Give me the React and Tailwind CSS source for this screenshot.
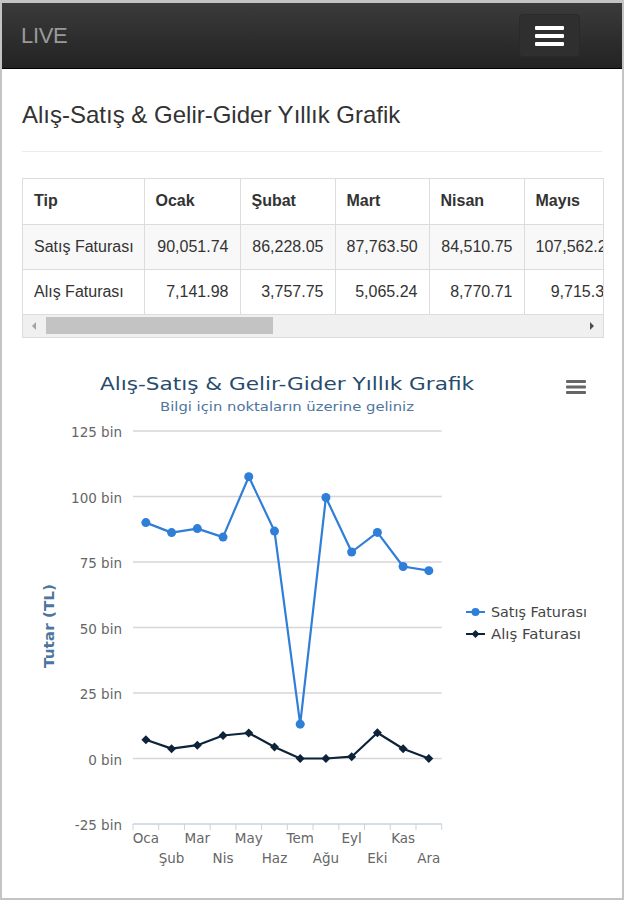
import { useState } from "react";

const months = ["Oca", "Şub", "Mar", "Nis", "May", "Haz", "Tem", "Ağu", "Eyl", "Eki", "Kas", "Ara"];

const satis = [90.05, 86.23, 87.76, 84.51, 107.56, 86.8, 13.1, 99.6, 78.8, 86.3, 73.3, 71.7];
const alis = [7.14, 3.76, 5.07, 8.77, 9.72, 4.4, 0, 0, 0.7, 9.8, 3.7, 0];

const tableCols = [
  { label: "Tip", width: "w-[121px]" },
  { label: "Ocak", width: "w-[96px]" },
  { label: "Şubat", width: "w-[95px]" },
  { label: "Mart", width: "w-[94px]" },
  { label: "Nisan", width: "w-[95px]" },
  { label: "Mayıs", width: "w-[100px]" },
];

const tableRows = [
  { name: "Satış Faturası", values: ["90,051.74", "86,228.05", "87,763.50", "84,510.75", "107,562.25"], striped: true },
  { name: "Alış Faturası", values: ["7,141.98", "3,757.75", "5,065.24", "8,770.71", "9,715.34"], striped: false },
];

// chart geometry, in page pixels
const left = 133;
const right = 441.7;
const step = (right - left) / 12;
const yOf = (v) => 757.5 - v * 2.62;
const xOf = (i) => left + step * (i + 0.5);
const font = "'DejaVu Sans', Verdana, sans-serif";

const Navbar = () => (
  <div className="flex h-[66px] items-center justify-between border-b border-black bg-gradient-to-b from-[#3b3b3b] to-[#232323] pl-[19px] pr-[42px]">
    <span className="font-['Liberation_Sans',Arial,sans-serif] text-[22px] tracking-[-0.3px] text-[#9a9a9a]">LIVE</span>
    <button className="flex h-[43px] w-[61px] flex-col items-center justify-center gap-[4px] rounded-[4px] border border-[#2a2a2a] bg-[#2f2f2f]">
      <span className="h-[4px] w-[29px] rounded-[1px] bg-white" />
      <span className="h-[4px] w-[29px] rounded-[1px] bg-white" />
      <span className="h-[4px] w-[29px] rounded-[1px] bg-white" />
    </button>
  </div>
);

const DataTable = () => (
  <div className="w-[582px] overflow-hidden border border-[#dcdcdc] font-['Liberation_Sans',Arial,sans-serif] text-[16px] text-[#333]">
    <table className="w-[601px] table-fixed border-collapse">
      <thead>
        <tr className="h-[45px]">
          {tableCols.map((c, i) => (
            <th key={c.label} className={`${c.width} border-b border-[#dcdcdc] px-[11px] text-left font-bold ${i < 5 ? "border-r" : ""}`}>
              {c.label}
            </th>
          ))}
        </tr>
      </thead>
      <tbody>
        {tableRows.map((row) => (
          <tr key={row.name} className={`h-[45px] ${row.striped ? "bg-[#f8f8f8]" : "bg-white"}`}>
            <td className="border-b border-r border-[#dcdcdc] px-[11px] whitespace-nowrap">{row.name}</td>
            {row.values.map((v, i) => (
              <td key={i} className={`border-b border-[#dcdcdc] px-[11px] text-right whitespace-nowrap ${i < 4 ? "border-r" : ""}`}>
                {v}
              </td>
            ))}
          </tr>
        ))}
      </tbody>
    </table>
    <div className="flex h-[22px] items-center bg-[#f0f0f0] px-[8px]">
      <svg width="6" height="8" viewBox="0 0 6 8" className="mr-[9px]">
        <path d="M5 0 L1 4 L5 8 Z" fill="#a3a3a3" />
      </svg>
      <div className="h-[17px] w-[227px] bg-[#c3c3c3]" />
      <div className="flex-1" />
      <svg width="6" height="8" viewBox="0 0 6 8">
        <path d="M1 0 L5 4 L1 8 Z" fill="#4d4d4d" />
      </svg>
    </div>
  </div>
);

const Chart = () => {
  const [hover, setHover] = useState(null);
  const grid = [125, 100, 75, 50, 25, 0];
  const line = (data) => data.map((v, i) => `${i ? "L" : "M"}${xOf(i).toFixed(1)} ${yOf(v).toFixed(1)}`).join(" ");

  return (
    <svg width="582" height="545" viewBox="22 345 582 545" className="block">
      <text x="100" y="389" fontFamily={font} fontSize="18" fill="#274b6d" textLength="374" lengthAdjust="spacingAndGlyphs">
        Alış-Satış &amp; Gelir-Gider Yıllık Grafik
      </text>
      <text x="160" y="410" fontFamily={font} fontSize="12.5" fill="#4d759e" textLength="254" lengthAdjust="spacingAndGlyphs">
        Bilgi için noktaların üzerine geliniz
      </text>

      <g fill="#666">
        <rect x="566" y="379" width="20" height="3" rx="1" />
        <rect x="566" y="384.5" width="20" height="3" rx="1" />
        <rect x="566" y="390" width="20" height="3" rx="1" />
      </g>

      {grid.map((g) => (
        <line key={g} x1={left} x2={right} y1={yOf(g)} y2={yOf(g)} stroke="#d6d6d6" strokeWidth="1.5" />
      ))}
      <line x1={left} x2={right} y1={yOf(-25)} y2={yOf(-25)} stroke="#c8d2dc" strokeWidth="1.5" />
      {Array.from({ length: 13 }, (_, i) => (
        <line key={i} x1={left + step * i} x2={left + step * i} y1={yOf(-25)} y2={yOf(-25) + 6} stroke="#c8d2dc" strokeWidth="1" />
      ))}

      {[125, 100, 75, 50, 25, 0, -25].map((g) => (
        <text key={g} x="122" y={yOf(g) + 6} textAnchor="end" fontFamily={font} fontSize="13.5" fill="#666">
          {g} bin
        </text>
      ))}

      <text transform="translate(54 625) rotate(-90)" textAnchor="middle" fontFamily={font} fontSize="14" fontWeight="bold" fill="#4d759e" textLength="84" lengthAdjust="spacingAndGlyphs">
        Tutar (TL)
      </text>

      {months.map((m, i) => (
        <text key={m} x={xOf(i)} y={i % 2 === 0 ? 842 : 862} textAnchor="middle" fontFamily={font} fontSize="13.5" fill="#666">
          {m}
        </text>
      ))}

      <path d={line(satis)} fill="none" stroke="#2f7ed8" strokeWidth="2.2" strokeLinejoin="round" />
      <path d={line(alis)} fill="none" stroke="#0d233a" strokeWidth="2.2" strokeLinejoin="round" />
      {satis.map((v, i) => (
        <circle key={i} cx={xOf(i)} cy={yOf(v)} r={hover === `s${i}` ? 6 : 4.5} fill="#2f7ed8" onMouseEnter={() => setHover(`s${i}`)} onMouseLeave={() => setHover(null)} />
      ))}
      {alis.map((v, i) => {
        const x = xOf(i);
        const y = yOf(v);
        return <path key={i} d={`M${x} ${y - 4.5} L${x + 4.5} ${y} L${x} ${y + 4.5} L${x - 4.5} ${y} Z`} fill="#0d233a" />;
      })}

      <line x1="466" x2="485" y1="611" y2="611" stroke="#2f7ed8" strokeWidth="2" />
      <circle cx="475.5" cy="611" r="4" fill="#2f7ed8" />
      <text x="491" y="616" fontFamily={font} fontSize="13.5" fill="#444" textLength="96" lengthAdjust="spacingAndGlyphs">
        Satış Faturası
      </text>
      <line x1="466" x2="485" y1="633" y2="633" stroke="#0d233a" strokeWidth="2" />
      <path d="M475.5 629 L479.5 633 L475.5 637 L471.5 633 Z" fill="#0d233a" />
      <text x="491" y="638" fontFamily={font} fontSize="13.5" fill="#444" textLength="90" lengthAdjust="spacingAndGlyphs">
        Alış Faturası
      </text>
    </svg>
  );
};

export default function App() {
  return (
    <div className="h-[900px] w-[624px] overflow-hidden border-2 border-t-[3px] border-[#c4c4c4] bg-white">
      <Navbar />
      <div className="px-[20px]">
        <h3 className="mt-[32px] font-['Liberation_Sans',Arial,sans-serif] text-[24px] leading-[28px] text-[#333]">
          Alış-Satış &amp; Gelir-Gider Yıllık Grafik
        </h3>
        <hr className="mt-[22px] border-t border-[#ececec]" />
        <div className="mt-[26px]">
          <DataTable />
        </div>
        <div className="mt-[8px]">
          <Chart />
        </div>
      </div>
    </div>
  );
}
